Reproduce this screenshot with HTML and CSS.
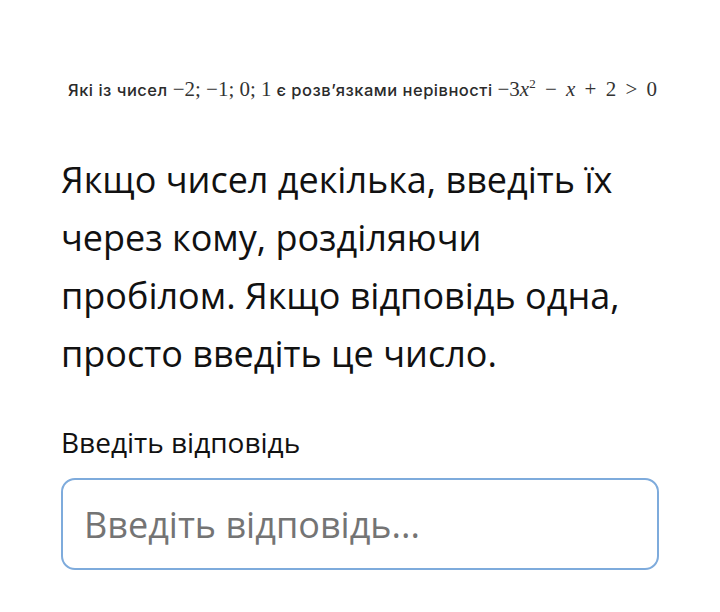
FILE: index.html
```html
<!DOCTYPE html>
<html lang="uk">
<head>
    <meta charset="UTF-8">
    <title>Завдання</title>
    <link rel="stylesheet" href="styles.css">
</head>
<body>
    <div class="task">
        <!-- Question line -->
        <p class="question">Які із чисел <span class="math">−2; −1; 0; 1</span> є розв’язками нерівності <span class="math math-ops">−3<i>x</i><sup>2</sup> − <i>x</i> + 2 &gt; 0</span></p>

        <p class="hint">Якщо чисел декілька, введіть їх через кому, розділяючи пробілом. Якщо відповідь одна, просто введіть це число.</p>

        <label class="answer-label" for="answer">Введіть відповідь</label>
        <input class="answer-input" id="answer" type="text" placeholder="Введіть відповідь...">
    </div>
</body>
</html>
```

FILE: styles.css
```css
body {
    margin: 0;
    background: #fff;
    font-family: 'Open Sans', sans-serif;
    color: #111;
}

.task {
    padding: 63px 61px 0 61px;
}

/* Question line */
.question {
    margin: 0 0 0 7px;
    font-family: 'Inter', 'Liberation Sans', sans-serif;
    font-size: 16.5px;
    font-weight: 500;
    letter-spacing: 0.5px;
    color: #2b2b2b;
    white-space: nowrap;
    line-height: 52px;
}

.math {
    font-family: 'Liberation Serif', serif;
    font-size: 21px;
    letter-spacing: 0;
    color: #333;
}

.math-ops {
    word-spacing: 4px;
}

.math i {
    font-style: italic;
}

.math sup {
    font-size: 13px;
    vertical-align: 8px;
    line-height: 0;
}

/* Instructions */
.hint {
    margin: 35px 0 0 0;
    width: 580px;
    font-size: 36px;
    line-height: 58px;
}

.answer-label {
    display: block;
    margin-top: 40px;
    font-size: 28px;
    line-height: 38px;
}

.answer-input {
    display: block;
    box-sizing: border-box;
    margin-top: 17px;
    width: 598px;
    height: 92px;
    padding: 0 21px;
    border: 2px solid #7eabdc;
    border-radius: 14px;
    font-family: 'Open Sans', sans-serif;
    font-size: 36px;
    color: #222;
    outline: none;
}

.answer-input::placeholder {
    color: #747474;
}
```
